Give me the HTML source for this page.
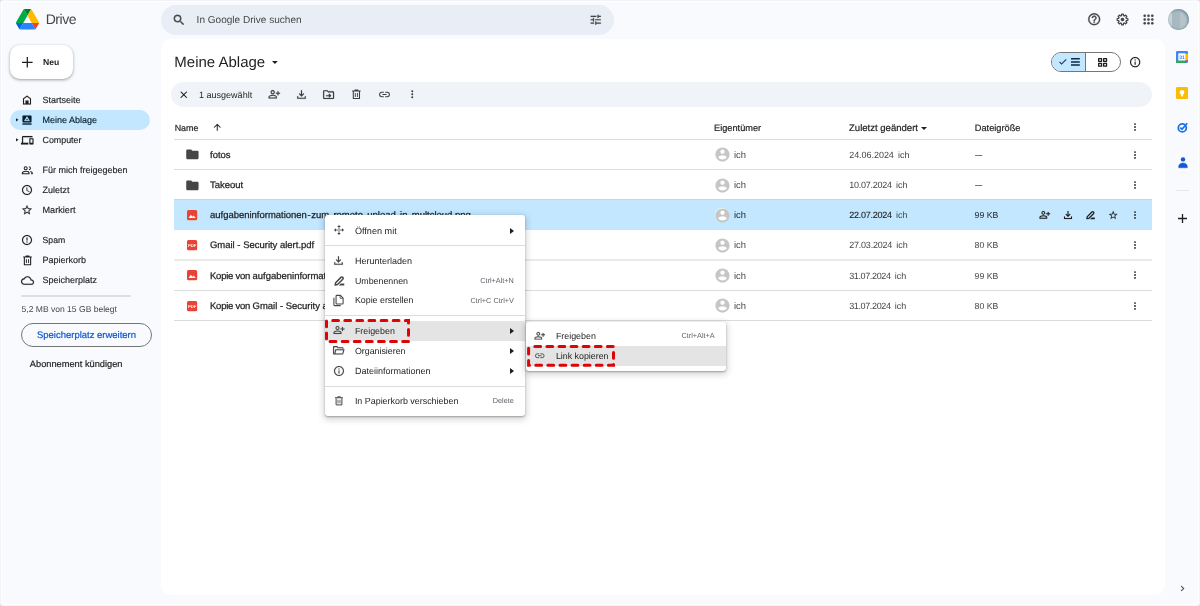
<!DOCTYPE html>
<html lang="de">
<head>
<meta charset="utf-8">
<title>Meine Ablage – Google Drive</title>
<style>
*{box-sizing:border-box;margin:0;padding:0}
html,body{width:1200px;height:606px;overflow:hidden;background:#d9d9db}
body{text-rendering:geometricPrecision;font-family:"Liberation Sans",sans-serif;font-size:9px;color:#1f1f1f;position:relative}
#outer{position:absolute;left:0;top:0;width:1200px;height:606px;background:#f2f3f7;border-radius:3px}
#frame{position:absolute;left:1px;top:1px;width:1198px;height:604px;background:#fff;border-radius:3px}
#app{position:absolute;left:2px;top:2px;width:1195.600px;height:601.600px;background:#f8fafd;border-radius:2px;overflow:hidden}
#root{position:absolute;left:-2px;top:-2px;width:1200px;height:606px;will-change:transform}
.t{position:absolute;white-space:nowrap;line-height:12px;height:12px;font-size:9px}
.abs{position:absolute}
svg{position:absolute;overflow:visible}
.nav{color:#1f1f1f;-webkit-text-stroke:0.15px #1f1f1f}
.g{color:#444746}
.hd{color:#1f1f1f;-webkit-text-stroke:0.2px #1f1f1f}
.fn{color:#1f1f1f;-webkit-text-stroke:0.25px #1f1f1f;font-size:9.480px}
.line{position:absolute;left:174px;width:978px;height:1px;background:#dcdcdc;transform:rotate(0.0001deg)}
.mi{color:#1f1f1f}
.sc{color:#5f6368;font-size:7.300px}
.menu{position:absolute;background:#fff;border-radius:3px;box-shadow:0 1px 2px rgba(0,0,0,.3),0 2px 6px 2px rgba(0,0,0,.15)}
.sep{position:absolute;height:1px;background:#dcdcdc}
.hl{position:absolute;background:#e4e4e4}
.dash{position:absolute;fill:none;stroke:#dc0505;stroke-width:3;stroke-linecap:round;stroke-dasharray:5.800 6.300;stroke-dashoffset:5.900}
</style>
</head>
<body>
<div id="outer"></div><div id="frame"></div>
<div id="app"><div id="root">

<div id="topbar">
<svg id="logo" style="left:16px;top:9px" width="23" height="20.500" viewBox="0 0 87.300 78">
<path d="m6.600 66.850 3.850 6.650c.8 1.400 1.950 2.500 3.300 3.300l13.750-23.800h-27.500c0 1.550.4 3.100 1.200 4.500z" fill="#0066da"/>
<path d="m43.650 25-13.750-23.800c-1.350.8-2.500 1.900-3.300 3.300l-25.400 44a9.060 9.060 0 0 0 -1.200 4.500h27.500z" fill="#00ac47"/>
<path d="m73.550 76.800c1.350-.8 2.500-1.900 3.300-3.300l1.600-2.750 7.650-13.250c.8-1.400 1.200-2.950 1.200-4.500h-27.502l5.852 11.500z" fill="#ea4335"/>
<path d="m43.650 25 13.750-23.800c-1.350-.8-2.900-1.200-4.500-1.200h-18.500c-1.600 0-3.150.45-4.500 1.200z" fill="#00832d"/>
<path d="m59.800 53h-32.300l-13.750 23.800c1.350.8 2.900 1.200 4.500 1.200h50.800c1.600 0 3.150-.45 4.500-1.200z" fill="#2684fc"/>
<path d="m73.400 26.500-12.700-22c-.8-1.400-1.950-2.500-3.300-3.300l-13.750 23.800 16.150 28h27.450c0-1.550-.4-3.100-1.200-4.500z" fill="#ffba00"/>
</svg>
<div class="t " style="left:45.7px;top:10px;line-height:18px;height:18px;color:#444746;letter-spacing:-0.450px;font-size:14px">Drive</div>
<div class="abs" id="search" style="left:161px;top:4.500px;width:453px;height:30px;border-radius:15px;background:#e9eef6"></div>
<svg style="left:172.30px;top:12.80px;color:#444746" width="14.00" height="14.00" viewBox="0 0 24 24" fill="#444746" stroke="#444746" stroke-width="0.600"><path d="M15.500 14h-.79l-.28-.27A6.470 6.470 0 0 0 16 9.500 6.500 6.500 0 1 0 9.500 16c1.610 0 3.090-.59 4.230-1.570l.27.280v.79l5 4.990L20.490 19l-4.990-5zm-6 0C7.010 14 5 11.990 5 9.500S7.010 5 9.500 5 14 7.010 14 9.500 11.990 14 9.500 14z"/></svg>
<div class="t g" style="left:196.6px;top:15px;font-size:10.05px">In Google Drive suchen</div>
<svg style="left:588.85px;top:12.75px;color:#444746" width="13.50" height="13.50" viewBox="0 0 24 24" fill="#444746" stroke="#444746" stroke-width="0.25" stroke-linejoin="round"><path d="M3 17v2h6v-2H3zM3 5v2h10V5H3zm10 16v-2h8v-2h-8v-2h-2v6h2zM7 9v2H3v2h4v2h2V9H7zm14 4v-2H11v2h10zm-6-4h2V7h4V5h-4V3h-2v6z"/></svg>
<svg style="left:1087.30px;top:12.30px;color:#444746" width="14.40" height="14.40" viewBox="0 0 24 24" fill="#444746" stroke="#444746" stroke-width="0.500"><path d="M11 18h2v-2h-2v2zm1-16C6.480 2 2 6.480 2 12s4.480 10 10 10 10-4.480 10-10S17.520 2 12 2zm0 18c-4.410 0-8-3.590-8-8s3.590-8 8-8 8 3.590 8 8-3.590 8-8 8zm0-14c-2.210 0-4 1.790-4 4h2c0-1.100.9-2 2-2s2 .9 2 2c0 2-3 1.750-3 5h2c0-2.250 3-2.500 3-5 0-2.210-1.790-4-4-4z"/></svg>
<svg style="left:1115.50px;top:13.00px;color:#444746" width="13.00" height="13.00" viewBox="0 0 24 24" fill="#444746" stroke="#444746" stroke-width="0.25" stroke-linejoin="round"><path d="M10.10 4.85 L10.41 2.13 L13.59 2.13 L13.90 4.85 L15.71 5.60 L17.85 3.89 L20.11 6.15 L18.40 8.29 L19.15 10.10 L21.87 10.41 L21.87 13.59 L19.15 13.90 L18.40 15.71 L20.11 17.85 L17.85 20.11 L15.71 18.40 L13.90 19.15 L13.59 21.87 L10.41 21.87 L10.10 19.15 L8.29 18.40 L6.15 20.11 L3.89 17.85 L5.60 15.71 L4.85 13.90 L2.13 13.59 L2.13 10.41 L4.85 10.10 L5.60 8.29 L3.89 6.15 L6.15 3.89 L8.29 5.60Z" fill="none" stroke="currentColor" stroke-width="2.300" stroke-linejoin="round"/><circle cx="12" cy="12" r="3.200"/></svg>
<svg style="left:1142.20px;top:12.90px;color:#444746" width="13.00" height="13.00" viewBox="0 0 24 24" fill="#444746" stroke="#444746" stroke-width="0.25" stroke-linejoin="round"><circle cx="5" cy="5" r="2.300"/><circle cx="5" cy="12" r="2.300"/><circle cx="5" cy="19" r="2.300"/><circle cx="12" cy="5" r="2.300"/><circle cx="12" cy="12" r="2.300"/><circle cx="12" cy="19" r="2.300"/><circle cx="19" cy="5" r="2.300"/><circle cx="19" cy="12" r="2.300"/><circle cx="19" cy="19" r="2.300"/></svg>
<div class="abs" id="avatar" style="left:1168.200px;top:9px;width:20.800px;height:20.800px;border-radius:50%;background:linear-gradient(90deg,#c6d3d8 0,#c6d3d8 17%,#a6b7bf 19%,#a9bac2 58%,#b7c5cb 60%,#b4c2c9 100%);box-shadow:inset -1.500px 1.500px 2px #7f98a4,inset 0 -1px 1.500px #8fa5af"></div>
</div>
<div id="sidebar">
<div class="abs" style="left:10px;top:45px;width:63px;height:34px;border-radius:10px;background:#fff;box-shadow:0 1px 2px rgba(60,64,67,.3),0 1px 3px 1px rgba(60,64,67,.15)"></div>
<svg style="left:22.200px;top:56.800px" width="10.600" height="10.600" viewBox="0 0 11 11"><path d="M5.500 0v11M0 5.500h11" stroke="#1f1f1f" stroke-width="1.300" fill="none"/></svg>
<div class="t " style="left:43px;top:56px;font-weight:bold;color:#1f1f1f;font-size:8.6px">Neu</div>
<div class="abs" style="left:10px;top:110px;width:140px;height:20px;border-radius:10px;background:#c2e7ff"></div>
<svg style="left:21.20px;top:94.00px;color:#1f1f1f" width="12.00" height="12.00" viewBox="0 0 24 24" fill="#1f1f1f" stroke="#1f1f1f" stroke-width="0.25" stroke-linejoin="round"><path d="M12 3L4 9v12h16V9l-8-6zm6 16H6v-9l6-4.500 6 4.500v9z"/><path d="M9 13h6v7H9z"/></svg>
<div class="t nav" style="left:42.5px;top:94px;color:#1f1f1f">Startseite</div>
<svg style="left:21.20px;top:114.00px;color:#001d35" width="12.00" height="12.00" viewBox="0 0 24 24" fill="#001d35" stroke="#001d35" stroke-width="0.25" stroke-linejoin="round"><path d="M5 3h14a2 2 0 0 1 2 2v10a2 2 0 0 1-2 2H5a2 2 0 0 1-2-2V5a2 2 0 0 1 2-2z"/><path d="M3 18.700h18v2.600H3z"/><path d="M12 5.200l5 8.300H7z" fill="#c2e7ff" stroke="#c2e7ff" stroke-width="1" stroke-linejoin="round"/><circle cx="12" cy="10.800" r="1.500" stroke="none"/></svg>
<div class="t nav" style="left:42.5px;top:114px;color:#001d35">Meine Ablage</div>
<svg style="left:20.95px;top:133.75px;color:#1f1f1f" width="12.50" height="12.50" viewBox="0 0 24 24" fill="#1f1f1f" stroke="#1f1f1f" stroke-width="0.25" stroke-linejoin="round"><path d="M4 6h18V4H4c-1.100 0-2 .9-2 2v11H0v3h14v-3H4V6zm19 2h-6c-.55 0-1 .45-1 1v10c0 .55.45 1 1 1h6c.55 0 1-.45 1-1V9c0-.55-.45-1-1-1zm-1 9h-4v-7h4v7z"/></svg>
<div class="t nav" style="left:42.5px;top:134px;color:#1f1f1f;font-size:8.9px">Computer</div>
<svg style="left:20.95px;top:163.75px;color:#1f1f1f" width="12.50" height="12.50" viewBox="0 0 24 24" fill="#1f1f1f" stroke="#1f1f1f" stroke-width="0.25" stroke-linejoin="round"><circle cx="9" cy="8.300" r="2.900" fill="none" stroke="currentColor" stroke-width="2"/><path d="M2.500 18.600v-1.200c0-2.300 4.200-3.500 6.500-3.500s6.500 1.200 6.500 3.500v1.200z" fill="none" stroke="currentColor" stroke-width="2" stroke-linejoin="round"/><path d="M15.200 5.400a2.900 2.900 0 0 1 0 5.800M17.800 14.300c2 .5 3.900 1.500 3.900 3.100v1.200h-2.500" fill="none" stroke="currentColor" stroke-width="2"/></svg>
<div class="t nav" style="left:42.5px;top:164px;color:#1f1f1f">Für mich freigegeben</div>
<svg style="left:21.20px;top:184.00px;color:#1f1f1f" width="12.00" height="12.00" viewBox="0 0 24 24" fill="#1f1f1f" stroke="#1f1f1f" stroke-width="0.25" stroke-linejoin="round"><path d="M11.990 2C6.470 2 2 6.480 2 12s4.470 10 9.990 10C17.520 22 22 17.520 22 12S17.520 2 11.990 2zM12 20c-4.420 0-8-3.580-8-8s3.580-8 8-8 8 3.580 8 8-3.580 8-8 8zm.5-13H11v6l5.250 3.150.75-1.230-4.500-2.670z"/></svg>
<div class="t nav" style="left:42.5px;top:184px;color:#1f1f1f">Zuletzt</div>
<svg style="left:21.20px;top:204.00px;color:#1f1f1f" width="12.00" height="12.00" viewBox="0 0 24 24" fill="#1f1f1f" stroke="#1f1f1f" stroke-width="0.25" stroke-linejoin="round"><path d="M22 9.240l-7.190-.62L12 2 9.190 8.630 2 9.240l5.460 4.730L5.820 21 12 17.270 18.180 21l-1.630-7.030L22 9.240zM12 15.400l-3.760 2.270 1-4.280-3.320-2.880 4.380-.38L12 6.100l1.710 4.040 4.380.38-3.320 2.880 1 4.280L12 15.400z"/></svg>
<div class="t nav" style="left:42.5px;top:204px;color:#1f1f1f;font-size:9.15px">Markiert</div>
<svg style="left:21.20px;top:234.00px;color:#1f1f1f" width="12.00" height="12.00" viewBox="0 0 24 24" fill="#1f1f1f" stroke="#1f1f1f" stroke-width="0.25" stroke-linejoin="round"><path d="M11 15h2v2h-2zm0-8h2v6h-2zm.99-5C6.470 2 2 6.480 2 12s4.470 10 9.990 10C17.520 22 22 17.520 22 12S17.520 2 11.990 2zM12 20c-4.420 0-8-3.580-8-8s3.580-8 8-8 8 3.580 8 8-3.580 8-8 8z"/></svg>
<div class="t nav" style="left:42.5px;top:234px;color:#1f1f1f;font-size:8.7px">Spam</div>
<svg style="left:20.70px;top:253.50px;color:#1f1f1f" width="13.00" height="13.00" viewBox="0 0 24 24" fill="#1f1f1f" stroke="#1f1f1f" stroke-width="0.25" stroke-linejoin="round"><path d="M4 5.500h16M9.200 5V3.600h5.600V5M6.200 6.500v13.300h11.600V6.500" fill="none" stroke="currentColor" stroke-width="2" stroke-linejoin="round"/><path d="M10 9.500v7.300M14 9.500v7.300" fill="none" stroke="currentColor" stroke-width="1.700"/></svg>
<div class="t nav" style="left:42.5px;top:254px;color:#1f1f1f">Papierkorb</div>
<svg style="left:20.70px;top:273.50px;color:#1f1f1f" width="13.00" height="13.00" viewBox="0 0 24 24" fill="#1f1f1f" stroke="#1f1f1f" stroke-width="0.25" stroke-linejoin="round"><path d="M12 6c2.620 0 4.880 1.860 5.390 4.430l.3 1.500 1.530.11c1.560.1 2.780 1.410 2.780 2.960 0 1.650-1.350 3-3 3H6c-2.210 0-4-1.790-4-4 0-2.050 1.530-3.760 3.560-3.970l1.070-.11.5-.95C8.080 7.140 9.940 6 12 6m0-2C9.110 4 6.600 5.640 5.350 8.040 2.340 8.360 0 10.910 0 14c0 3.310 2.690 6 6 6h13c2.760 0 5-2.240 5-5 0-2.640-2.050-4.780-4.650-4.960C18.670 6.590 15.640 4 12 4z"/></svg>
<div class="t nav" style="left:42.5px;top:274px;color:#1f1f1f">Speicherplatz</div>
<svg style="left:16.300px;top:118.2px" width="2.500" height="3.600" viewBox="0 0 3 4"><path d="M0 0l3 2-3 2z" fill="#1f1f1f"/></svg>
<svg style="left:16.300px;top:138.2px" width="2.500" height="3.600" viewBox="0 0 3 4"><path d="M0 0l3 2-3 2z" fill="#1f1f1f"/></svg>
<div class="abs" style="left:21px;top:295.400px;width:110px;height:2px;border-radius:1px;background:#dcdfe0"></div>
<div class="t g" style="left:21.5px;top:303px;font-size:8.55px">5,2 MB von 15 GB belegt</div>
<div class="abs" style="left:21px;top:323px;width:131px;height:24px;border-radius:12px;border:1px solid #747775"></div>
<div class="t " style="left:21px;top:330px;width:131px;text-align:center;color:#0b57d0;-webkit-text-stroke:0.2px #0b57d0;font-size:9.48px">Speicherplatz erweitern</div>
<div class="t " style="left:29.8px;top:358px;color:#1f1f1f;-webkit-text-stroke:0.2px #1f1f1f;font-size:9.28px">Abonnement kündigen</div>
</div>
<div id="main">
<div class="abs" style="left:161px;top:39.400px;width:1004px;height:556px;border-radius:10px;background:#fff"></div>
<div class="t " style="left:174.3px;top:53px;font-size:15px;line-height:20px;height:20px;color:#1f1f1f">Meine Ablage</div>
<svg style="left:272px;top:60.800px" width="5.800" height="3" viewBox="0 0 7 3.500"><path d="M0 0h7L3.500 3.500z" fill="#1f1f1f"/></svg>
<div class="abs" style="left:1051px;top:52px;width:70px;height:20px;border-radius:10px;border:1px solid #747775;background:#fff;overflow:hidden"><div class="abs" style="left:0;top:0;width:34px;height:18px;background:#c2e7ff;border-right:1px solid #747775"></div></div>
<svg style="left:1057.60px;top:57.20px;color:#0c2a45" width="9.60" height="9.60" viewBox="0 0 24 24" fill="#0c2a45" stroke="#0c2a45" stroke-width="0.9" stroke-linejoin="round"><path d="M9 16.170L4.830 12l-1.420 1.410L9 19 21 7l-1.410-1.410z"/></svg>
<svg style="left:1070.600px;top:58.100px" width="8.800" height="8" viewBox="0 0 8.800 8"><path d="M0 0.100h8.800v1.500H0zM0 3.200h8.800v1.500H0zM0 6.300h8.800v1.500H0z" fill="#0c2a45"/></svg>
<svg style="left:1098px;top:57.700px" width="9.200" height="8.800" viewBox="0 0 9.200 8.800"><path d="M0.650 0.650h2.900v2.700h-2.900zM5.650 0.650h2.900v2.700h-2.900zM0.650 5.450h2.900v2.700h-2.900zM5.650 5.450h2.900v2.700h-2.900z" fill="none" stroke="#1f1f1f" stroke-width="1.300" stroke-linejoin="round"/></svg>
<svg style="left:1129.15px;top:55.75px;color:#1f1f1f" width="12.30" height="12.30" viewBox="0 0 24 24" fill="#1f1f1f" stroke="#1f1f1f" stroke-width="0.25" stroke-linejoin="round"><path d="M11 7h2v2h-2zm0 4h2v6h-2zm1-9C6.480 2 2 6.480 2 12s4.480 10 10 10 10-4.480 10-10S17.520 2 12 2zm0 18c-4.410 0-8-3.590-8-8s3.590-8 8-8 8 3.590 8 8-3.590 8-8 8z"/></svg>
<div class="abs" style="left:171px;top:82px;width:981px;height:25px;border-radius:12.500px;background:#f0f4f9"></div>
<svg style="left:177.95px;top:89.05px;color:#1f1f1f" width="11.50" height="11.50" viewBox="0 0 24 24" fill="#1f1f1f" stroke="#1f1f1f" stroke-width="0.25" stroke-linejoin="round"><path d="M19 6.410L17.590 5 12 10.590 6.410 5 5 6.410 10.590 12 5 17.590 6.410 19 12 13.410 17.590 19 19 17.590 13.410 12z"/></svg>
<div class="t " style="left:199.1px;top:89px;color:#1f1f1f">1 ausgewählt</div>
<svg style="left:267.50px;top:88.30px;color:#3c3f40" width="12.60" height="12.60" viewBox="0 0 24 24" fill="#3c3f40" stroke="#3c3f40" stroke-width="0.25" stroke-linejoin="round"><path d="M20 9V6h-2v3h-3v2h3v3h2v-3h3V9h-3zM9 12c2.210 0 4-1.790 4-4s-1.790-4-4-4-4 1.790-4 4 1.790 4 4 4zm0-6c1.100 0 2 .9 2 2s-.9 2-2 2-2-.9-2-2 .9-2 2-2zm6.390 8.560C13.710 13.700 11.530 13 9 13s-4.710.7-6.390 1.560C1.610 15.070 1 16.100 1 17.220V20h16v-2.780c0-1.120-.61-2.150-1.610-2.660zM15 18H3v-.78c0-.38.2-.72.520-.88C4.710 15.730 6.630 15 9 15c2.370 0 4.290.73 5.480 1.340.32.160.52.500.52.880V18z"/></svg>
<svg style="left:294.90px;top:88.10px;color:#3c3f40" width="13.00" height="13.00" viewBox="0 0 24 24" fill="#3c3f40" stroke="#3c3f40" stroke-width="0.25" stroke-linejoin="round"><path d="M12 16l-5-5 1.400-1.450 2.600 2.600V4h2v8.150l2.600-2.600L17 11zM4 20v-5h2v3h12v-3h2v5z"/></svg>
<svg style="left:321.90px;top:88.00px;color:#3c3f40" width="13.20" height="13.20" viewBox="0 0 24 24" fill="#3c3f40" stroke="#3c3f40" stroke-width="0.25" stroke-linejoin="round"><path d="M20 6h-8l-2-2H4c-1.100 0-2 .9-2 2v12c0 1.100.9 2 2 2h16c1.100 0 2-.9 2-2V8c0-1.100-.9-2-2-2zm0 12H4V6h5.170l2 2H20v10zm-8.160-1.590L13.250 17.800 17 14l-3.750-3.800-1.410 1.410L13.170 13H7.500v2h5.670l-1.330 1.410z"/></svg>
<svg style="left:350.20px;top:88.20px;color:#3c3f40" width="12.80" height="12.80" viewBox="0 0 24 24" fill="#3c3f40" stroke="#3c3f40" stroke-width="0.25" stroke-linejoin="round"><path d="M4 5.500h16M9.200 5V3.600h5.600V5M6.200 6.500v13.300h11.600V6.500" fill="none" stroke="currentColor" stroke-width="2" stroke-linejoin="round"/><path d="M10 9.500v7.300M14 9.500v7.300" fill="none" stroke="currentColor" stroke-width="1.700"/></svg>
<svg style="left:377.50px;top:88.10px;color:#3c3f40" width="13.00" height="13.00" viewBox="0 0 24 24" fill="#3c3f40" stroke="#3c3f40" stroke-width="0.25" stroke-linejoin="round"><path d="M10.700 8H7a4 4 0 0 0 0 8h3.700M13.300 8H17a4 4 0 0 1 0 8h-3.700M8.200 12h7.600" fill="none" stroke="currentColor" stroke-width="1.900"/></svg>
<svg style="left:406.65px;top:89.35px;color:#3c3f40" width="10.50" height="10.50" viewBox="0 0 24 24" fill="#3c3f40" stroke="#3c3f40" stroke-width="0.25" stroke-linejoin="round"><circle cx="12" cy="5" r="2.150"/><circle cx="12" cy="12" r="2.150"/><circle cx="12" cy="19" r="2.150"/></svg>
<div class="t hd" style="left:174.7px;top:122px;font-size:8.9px">Name</div>
<svg style="left:211.75px;top:122.05px;color:#1f1f1f" width="10.50" height="10.50" viewBox="0 0 24 24" fill="#1f1f1f" stroke="#1f1f1f" stroke-width="0.25" stroke-linejoin="round"><path d="M4 12l1.410 1.410L11 7.830V20h2V7.830l5.580 5.590L20 12l-8-8-8 8z"/></svg>
<div class="t hd" style="left:714px;top:122px;font-size:9.23px">Eigentümer</div>
<div class="t hd" style="left:849px;top:123px;font-size:9.56px">Zuletzt geändert</div>
<svg style="left:921px;top:126.500px" width="6" height="3" viewBox="0 0 6 3"><path d="M0 0h6L3 3z" fill="#1f1f1f"/></svg>
<div class="t hd" style="left:974.8px;top:122px;font-size:9.22px">Dateigröße</div>
<svg style="left:1130.30px;top:122.00px;color:#1f1f1f" width="10.00" height="10.00" viewBox="0 0 24 24" fill="#1f1f1f"><circle cx="12" cy="5" r="2.150"/><circle cx="12" cy="12" r="2.150"/><circle cx="12" cy="19" r="2.150"/></svg>
<div class="line" style="top:139px"></div>
<div class="line" style="top:169.100px"></div>
<div class="line" style="top:199.100px;background:#d0d4d8"></div>
<div class="abs" style="left:174px;top:199.900px;width:978px;height:30.100px;background:#c2e7ff"></div>
<div class="line" style="top:259px;height:2px;background:#ebebeb"></div>
<div class="line" style="top:289.550px"></div>
<div class="line" style="top:319.650px"></div>
<svg style="left:184.60px;top:147.40px;color:#444746" width="14.80" height="14.80" viewBox="0 0 24 24" fill="#444746"><path d="M10 4H4c-1.100 0-1.990.9-1.990 2L2 18c0 1.100.9 2 2 2h16c1.100 0 2-.9 2-2V8c0-1.100-.9-2-2-2h-8l-2-2z"/></svg>
<div class="t fn" style="left:210px;top:150px;">fotos</div>
<div class="abs" style="left:715px;top:147.90px;width:14px;height:14px;border-radius:50%;background:#fff"></div>
<svg style="left:713.50px;top:146.40px;color:#c4c7c5" width="17.00" height="17.00" viewBox="0 0 24 24" fill="#c4c7c5"><path d="M12 2C6.480 2 2 6.480 2 12s4.480 10 10 10 10-4.480 10-10S17.520 2 12 2zm0 3c1.660 0 3 1.340 3 3s-1.340 3-3 3-3-1.340-3-3 1.340-3 3-3zm0 14.200c-2.500 0-4.710-1.280-6-3.220.03-1.990 4-3.080 6-3.080 1.990 0 5.970 1.090 6 3.080-1.290 1.940-3.500 3.220-6 3.220z"/></svg>
<div class="t g" style="left:734px;top:149px;font-size:9.4px">ich</div>
<div class="t g" style="left:849.2px;top:149px;word-spacing:1.700px"><span style="letter-spacing:-0.04px">24.06.2024</span> ich</div>
<div class="t g" style="left:975.3px;top:150px;font-size:6.800px;-webkit-text-stroke:0.250px #444746">—</div>
<svg style="left:1130.30px;top:150.00px;color:#1f1f1f" width="10.00" height="10.00" viewBox="0 0 24 24" fill="#1f1f1f"><circle cx="12" cy="5" r="2.150"/><circle cx="12" cy="12" r="2.150"/><circle cx="12" cy="19" r="2.150"/></svg>
<svg style="left:184.60px;top:177.52px;color:#444746" width="14.80" height="14.80" viewBox="0 0 24 24" fill="#444746"><path d="M10 4H4c-1.100 0-1.990.9-1.990 2L2 18c0 1.100.9 2 2 2h16c1.100 0 2-.9 2-2V8c0-1.100-.9-2-2-2h-8l-2-2z"/></svg>
<div class="t fn" style="left:210px;top:180px;">Takeout</div>
<div class="abs" style="left:715px;top:178.02px;width:14px;height:14px;border-radius:50%;background:#fff"></div>
<svg style="left:713.50px;top:176.52px;color:#c4c7c5" width="17.00" height="17.00" viewBox="0 0 24 24" fill="#c4c7c5"><path d="M12 2C6.480 2 2 6.480 2 12s4.480 10 10 10 10-4.480 10-10S17.520 2 12 2zm0 3c1.660 0 3 1.340 3 3s-1.340 3-3 3-3-1.340-3-3 1.340-3 3-3zm0 14.200c-2.500 0-4.710-1.280-6-3.220.03-1.990 4-3.080 6-3.080 1.990 0 5.970 1.090 6 3.080-1.290 1.940-3.500 3.220-6 3.220z"/></svg>
<div class="t g" style="left:734px;top:179px;font-size:9.4px">ich</div>
<div class="t g" style="left:849.2px;top:179px;word-spacing:1.700px"><span style="letter-spacing:-0.25px">10.07.2024</span> ich</div>
<div class="t g" style="left:975.3px;top:180px;font-size:6.800px;-webkit-text-stroke:0.250px #444746">—</div>
<svg style="left:1130.30px;top:180.12px;color:#1f1f1f" width="10.00" height="10.00" viewBox="0 0 24 24" fill="#1f1f1f"><circle cx="12" cy="5" r="2.150"/><circle cx="12" cy="12" r="2.150"/><circle cx="12" cy="19" r="2.150"/></svg>
<svg style="left:187px;top:210.14px" width="10.200" height="10.200" viewBox="0 0 10 10"><rect width="10" height="10" rx="1.500" fill="#ea4335"/><path d="M1.500 7.800l2.300-3.200 1.600 2.100 1.100-1.400 2 2.500z" fill="#fff"/></svg>
<div class="t fn" style="left:210px;top:210px;">aufgabeninformationen<span style="margin:0 0.600px">-</span>zum<span style="margin:0 0.600px">-</span>remote<span style="margin:0 0.600px">-</span>upload<span style="margin:0 0.600px">-</span>in<span style="margin:0 0.600px">-</span>multcloud.png</div>
<div class="abs" style="left:715px;top:208.14px;width:14px;height:14px;border-radius:50%;background:#fff"></div>
<svg style="left:713.50px;top:206.64px;color:#c4c7c5" width="17.00" height="17.00" viewBox="0 0 24 24" fill="#c4c7c5"><path d="M12 2C6.480 2 2 6.480 2 12s4.480 10 10 10 10-4.480 10-10S17.520 2 12 2zm0 3c1.660 0 3 1.340 3 3s-1.340 3-3 3-3-1.340-3-3 1.340-3 3-3zm0 14.200c-2.500 0-4.710-1.280-6-3.220.03-1.990 4-3.080 6-3.080 1.990 0 5.970 1.090 6 3.080-1.290 1.940-3.500 3.220-6 3.220z"/></svg>
<div class="t " style="left:734px;top:209px;color:#1f1f1f;font-size:9.4px">ich</div>
<div class="t " style="left:849.2px;top:209px;color:#1f1f1f;-webkit-text-stroke:0.100px #1f1f1f;word-spacing:1.700px"><span style="letter-spacing:-0.25px">22.07.2024</span> <span style="-webkit-text-stroke:0;color:#444746">ich</span></div>
<div class="t " style="left:974.6px;top:209px;color:#1f1f1f;font-size:8.7px">99 KB</div>
<svg style="left:1130.30px;top:210.24px;color:#1f1f1f" width="10.00" height="10.00" viewBox="0 0 24 24" fill="#1f1f1f"><circle cx="12" cy="5" r="2.150"/><circle cx="12" cy="12" r="2.150"/><circle cx="12" cy="19" r="2.150"/></svg>
<svg style="left:187px;top:240.26px" width="10.200" height="10.200" viewBox="0 0 10 10"><rect width="10" height="10" rx="1.500" fill="#ea4335"/><text x="5" y="6.500" font-size="4.100" font-weight="bold" fill="#fff" text-anchor="middle" font-family="&quot;Liberation Sans&quot;,sans-serif">PDF</text></svg>
<div class="t fn" style="left:210px;top:240px;">Gmail - Security alert.pdf</div>
<div class="abs" style="left:715px;top:238.26px;width:14px;height:14px;border-radius:50%;background:#fff"></div>
<svg style="left:713.50px;top:236.76px;color:#c4c7c5" width="17.00" height="17.00" viewBox="0 0 24 24" fill="#c4c7c5"><path d="M12 2C6.480 2 2 6.480 2 12s4.480 10 10 10 10-4.480 10-10S17.520 2 12 2zm0 3c1.660 0 3 1.340 3 3s-1.340 3-3 3-3-1.340-3-3 1.340-3 3-3zm0 14.200c-2.500 0-4.710-1.280-6-3.220.03-1.990 4-3.080 6-3.080 1.990 0 5.970 1.090 6 3.080-1.290 1.940-3.500 3.220-6 3.220z"/></svg>
<div class="t g" style="left:734px;top:239px;font-size:9.4px">ich</div>
<div class="t g" style="left:849.2px;top:239px;word-spacing:1.700px"><span style="letter-spacing:-0.21px">27.03.2024</span> ich</div>
<div class="t g" style="left:974.6px;top:239px;font-size:8.7px">80 KB</div>
<svg style="left:1130.30px;top:240.36px;color:#1f1f1f" width="10.00" height="10.00" viewBox="0 0 24 24" fill="#1f1f1f"><circle cx="12" cy="5" r="2.150"/><circle cx="12" cy="12" r="2.150"/><circle cx="12" cy="19" r="2.150"/></svg>
<svg style="left:187px;top:270.38px" width="10.200" height="10.200" viewBox="0 0 10 10"><rect width="10" height="10" rx="1.500" fill="#ea4335"/><path d="M1.500 7.800l2.300-3.200 1.600 2.100 1.100-1.400 2 2.500z" fill="#fff"/></svg>
<div class="t fn" style="left:210px;top:271px;"><span style="letter-spacing:-0.220px">Kopie von </span>aufgabeninformationen<span style="margin:0 0.600px">-</span>zum<span style="margin:0 0.600px">-</span>remote<span style="margin:0 0.600px">-</span>upload<span style="margin:0 0.600px">-</span>in<span style="margin:0 0.600px">-</span>multcloud.png</div>
<div class="abs" style="left:715px;top:268.38px;width:14px;height:14px;border-radius:50%;background:#fff"></div>
<svg style="left:713.50px;top:266.88px;color:#c4c7c5" width="17.00" height="17.00" viewBox="0 0 24 24" fill="#c4c7c5"><path d="M12 2C6.480 2 2 6.480 2 12s4.480 10 10 10 10-4.480 10-10S17.520 2 12 2zm0 3c1.660 0 3 1.340 3 3s-1.340 3-3 3-3-1.340-3-3 1.340-3 3-3zm0 14.200c-2.500 0-4.710-1.280-6-3.220.03-1.990 4-3.080 6-3.080 1.990 0 5.970 1.090 6 3.080-1.290 1.940-3.500 3.220-6 3.220z"/></svg>
<div class="t g" style="left:734px;top:270px;font-size:9.4px">ich</div>
<div class="t g" style="left:849.2px;top:270px;word-spacing:1.700px"><span style="letter-spacing:-0.37px">31.07.2024</span> ich</div>
<div class="t g" style="left:974.6px;top:270px;font-size:8.7px">99 KB</div>
<svg style="left:1130.30px;top:270.48px;color:#1f1f1f" width="10.00" height="10.00" viewBox="0 0 24 24" fill="#1f1f1f"><circle cx="12" cy="5" r="2.150"/><circle cx="12" cy="12" r="2.150"/><circle cx="12" cy="19" r="2.150"/></svg>
<svg style="left:187px;top:300.50px" width="10.200" height="10.200" viewBox="0 0 10 10"><rect width="10" height="10" rx="1.500" fill="#ea4335"/><text x="5" y="6.500" font-size="4.100" font-weight="bold" fill="#fff" text-anchor="middle" font-family="&quot;Liberation Sans&quot;,sans-serif">PDF</text></svg>
<div class="t fn" style="left:210px;top:301px;"><span style="letter-spacing:-0.220px">Kopie von </span>Gmail - Security alert.pdf</div>
<div class="abs" style="left:715px;top:298.50px;width:14px;height:14px;border-radius:50%;background:#fff"></div>
<svg style="left:713.50px;top:297.00px;color:#c4c7c5" width="17.00" height="17.00" viewBox="0 0 24 24" fill="#c4c7c5"><path d="M12 2C6.480 2 2 6.480 2 12s4.480 10 10 10 10-4.480 10-10S17.520 2 12 2zm0 3c1.660 0 3 1.340 3 3s-1.340 3-3 3-3-1.340-3-3 1.340-3 3-3zm0 14.200c-2.500 0-4.710-1.280-6-3.220.03-1.990 4-3.080 6-3.080 1.990 0 5.970 1.090 6 3.080-1.290 1.940-3.500 3.220-6 3.220z"/></svg>
<div class="t g" style="left:734px;top:300px;font-size:9.4px">ich</div>
<div class="t g" style="left:849.2px;top:300px;word-spacing:1.700px"><span style="letter-spacing:-0.37px">31.07.2024</span> ich</div>
<div class="t g" style="left:974.6px;top:300px;font-size:8.7px">80 KB</div>
<svg style="left:1130.30px;top:300.60px;color:#1f1f1f" width="10.00" height="10.00" viewBox="0 0 24 24" fill="#1f1f1f"><circle cx="12" cy="5" r="2.150"/><circle cx="12" cy="12" r="2.150"/><circle cx="12" cy="19" r="2.150"/></svg>
<svg style="left:1039.20px;top:209.30px;color:#1f1f1f" width="11.60" height="11.60" viewBox="0 0 24 24" fill="#1f1f1f" stroke="#1f1f1f" stroke-width="0.25" stroke-linejoin="round"><path d="M20 9V6h-2v3h-3v2h3v3h2v-3h3V9h-3zM9 12c2.210 0 4-1.790 4-4s-1.790-4-4-4-4 1.790-4 4 1.790 4 4 4zm0-6c1.100 0 2 .9 2 2s-.9 2-2 2-2-.9-2-2 .9-2 2-2zm6.390 8.560C13.710 13.700 11.530 13 9 13s-4.710.7-6.390 1.560C1.610 15.070 1 16.100 1 17.220V20h16v-2.780c0-1.120-.61-2.150-1.610-2.660zM15 18H3v-.78c0-.38.2-.72.520-.88C4.710 15.730 6.630 15 9 15c2.370 0 4.290.73 5.480 1.340.32.160.52.500.52.880V18z"/></svg>
<svg style="left:1061.60px;top:209.10px;color:#1f1f1f" width="12.00" height="12.00" viewBox="0 0 24 24" fill="#1f1f1f" stroke="#1f1f1f" stroke-width="0.25" stroke-linejoin="round"><path d="M12 16l-5-5 1.400-1.450 2.600 2.600V4h2v8.150l2.600-2.600L17 11zM4 20v-5h2v3h12v-3h2v5z"/></svg>
<svg style="left:1085.00px;top:209.80px;color:#1f1f1f" width="10.60" height="10.60" viewBox="0 0 24 24" fill="#1f1f1f" stroke="#1f1f1f" stroke-width="0.25" stroke-linejoin="round"><path d="M4.300 19.700l.9-4.600L15.600 4.700a2.600 2.600 0 0 1 3.700 3.700L8.900 18.800z" fill="none" stroke="currentColor" stroke-width="2.900" stroke-linejoin="round"/><path d="M15.200 16.800h7v3.900h-10.900z" stroke="none"/></svg>
<svg style="left:1107.60px;top:209.90px;color:#1f1f1f" width="10.40" height="10.40" viewBox="0 0 24 24" fill="#1f1f1f" stroke="#1f1f1f" stroke-width="0.25" stroke-linejoin="round"><path d="M22 9.240l-7.190-.62L12 2 9.190 8.630 2 9.240l5.460 4.730L5.820 21 12 17.270 18.180 21l-1.630-7.030L22 9.240zM12 15.400l-3.760 2.270 1-4.280-3.320-2.880 4.380-.38L12 6.100l1.710 4.040 4.380.38-3.320 2.880 1 4.280L12 15.400z"/></svg>
</div>
<div id="rail">
<svg style="left:1176px;top:51px" width="12" height="12" viewBox="0 0 12 12">
<rect x="0" y="0" width="12" height="12" rx="1.200" fill="#4285f4"/>
<rect x="9.200" y="2.800" width="2.800" height="6.400" fill="#fbbc04"/>
<rect x="0" y="9.200" width="9.200" height="2.800" fill="#34a853"/>
<rect x="0" y="2.800" width="2.800" height="6.400" fill="#4285f4"/>
<path d="M9.200 9.200H12L9.200 12z" fill="#ea4335"/>
<rect x="2.300" y="2.300" width="7.200" height="7.200" fill="#fff"/>
<text x="6" y="7.900" font-size="5" font-weight="bold" fill="#4285f4" text-anchor="middle" font-family="&quot;Liberation Sans&quot;,sans-serif">31</text>
</svg>
<svg style="left:1176.200px;top:86.500px" width="12" height="12" viewBox="0 0 12 12">
<rect width="12" height="12" rx="1.200" fill="#fbbc04"/>
<circle cx="6" cy="5.200" r="2.300" fill="#fff"/><rect x="4.900" y="7" width="2.200" height="2.400" fill="#fff"/>
</svg>
<svg style="left:1177px;top:122px" width="11" height="11" viewBox="0 0 11 11">
<circle cx="5.300" cy="5.900" r="4" fill="none" stroke="#1a73e8" stroke-width="1.800"/>
<path d="M3.300 5.600l1.700 1.700L10.200 1.200" fill="none" stroke="#1a73e8" stroke-width="1.700"/>
</svg>
<svg style="left:1177.500px;top:156.500px" width="10" height="11" viewBox="0 0 10 11">
<circle cx="5" cy="2.400" r="2.200" fill="#1557d6"/>
<path d="M0.700 10.800V9.300C0.700 7 3 5.900 5 5.900S9.300 7 9.300 9.300V10.800z" fill="#1557d6" stroke="#1557d6" stroke-width="0.400" stroke-linejoin="round"/>
</svg>
<div class="abs" style="left:1176px;top:190px;width:13px;height:1px;background:#e6e8ec"></div>
<svg style="left:1178px;top:214px" width="9" height="9" viewBox="0 0 9 9"><path d="M4.500 0v9M0 4.500h9" stroke="#1f1f1f" stroke-width="1.300" fill="none"/></svg>
<svg style="left:1177.00px;top:583.00px;color:#444746" width="11.00" height="11.00" viewBox="0 0 24 24" fill="#444746" stroke="#444746" stroke-width="0.25" stroke-linejoin="round"><path d="M10 6L8.590 7.410 13.170 12l-4.580 4.590L10 18l6-6z"/></svg>
</div>
<div id="ctx">
<div class="menu" style="left:325px;top:215px;width:200px;height:201px"></div>
<div class="sep" style="left:325px;width:200px;top:245px"></div>
<div class="sep" style="left:325px;width:200px;top:315px"></div>
<div class="sep" style="left:325px;width:200px;top:386px"></div>
<div class="hl" style="left:325px;width:200px;top:321px;height:19.500px"></div>
<svg style="left:332.70px;top:224.40px;color:#444746" width="12.00" height="12.00" viewBox="0 0 24 24" fill="#444746" stroke="#444746" stroke-width="0.25" stroke-linejoin="round"><path d="M12 5v14M5 12h14" fill="none" stroke="currentColor" stroke-width="1.700"/><path d="M12 1.800l3.600 4.200H8.400zM12 22.200l3.600-4.200H8.400zM1.800 12l4.200-3.600v7.200zM22.200 12l-4.200-3.600v7.200z" stroke="none"/><circle cx="12" cy="12" r="1.600" fill="#fff" stroke="none"/></svg>
<div class="t mi" style="left:354.9px;top:225px;font-size:9.1px">Öffnen mit</div>
<svg style="left:509.500px;top:228.1px" width="4" height="6" viewBox="0 0 4 6"><path d="M0 0l4 3-4 3z" fill="#1f1f1f"/></svg>
<svg style="left:332.20px;top:253.80px;color:#444746" width="13.00" height="13.00" viewBox="0 0 24 24" fill="#444746" stroke="#444746" stroke-width="0.25" stroke-linejoin="round"><path d="M12 16l-5-5 1.400-1.450 2.600 2.600V4h2v8.150l2.600-2.600L17 11zM4 20v-5h2v3h12v-3h2v5z"/></svg>
<div class="t mi" style="left:354.9px;top:255px;">Herunterladen</div>
<svg style="left:332.60px;top:274.50px;color:#444746" width="12.20" height="12.20" viewBox="0 0 24 24" fill="#444746" stroke="#444746" stroke-width="0.25" stroke-linejoin="round"><path d="M4.300 19.700l.9-4.600L15.600 4.700a2.600 2.600 0 0 1 3.700 3.700L8.900 18.800z" fill="none" stroke="currentColor" stroke-width="2.900" stroke-linejoin="round"/><path d="M15.200 16.800h7v3.900h-10.900z" stroke="none"/></svg>
<div class="t mi" style="left:354.9px;top:275px;font-size:8.85px">Umbenennen</div>
<div class="t sc" style="left:413.9px;top:275px;width:100px;text-align:right">Ctrl+Alt+N</div>
<svg style="left:332.20px;top:294.10px;color:#444746" width="13.00" height="13.00" viewBox="0 0 24 24" fill="#444746" stroke="#444746" stroke-width="0.25" stroke-linejoin="round"><path d="M9 2.500h6.500l5 5V17a1.500 1.500 0 0 1-1.500 1.500H9A1.500 1.500 0 0 1 7.500 17V4A1.500 1.500 0 0 1 9 2.500z" fill="none" stroke="currentColor" stroke-width="2" stroke-linejoin="round"/><path d="M15 3v5h5" fill="none" stroke="currentColor" stroke-width="1.500"/><path d="M3.500 7v13A1.500 1.500 0 0 0 5 21.500h11" fill="none" stroke="currentColor" stroke-width="2"/></svg>
<div class="t mi" style="left:354.9px;top:294px;font-size:8.85px">Kopie erstellen</div>
<div class="t sc" style="left:413.9px;top:295px;width:100px;text-align:right">Ctrl+C Ctrl+V</div>
<svg style="left:332.70px;top:324.20px;color:#444746" width="12.00" height="12.00" viewBox="0 0 24 24" fill="#444746" stroke="#444746" stroke-width="0.25" stroke-linejoin="round"><path d="M20 9V6h-2v3h-3v2h3v3h2v-3h3V9h-3zM9 12c2.210 0 4-1.790 4-4s-1.790-4-4-4-4 1.790-4 4 1.790 4 4 4zm0-6c1.100 0 2 .9 2 2s-.9 2-2 2-2-.9-2-2 .9-2 2-2zm6.390 8.560C13.710 13.700 11.530 13 9 13s-4.710.7-6.390 1.560C1.610 15.070 1 16.100 1 17.220V20h16v-2.780c0-1.120-.61-2.150-1.610-2.660zM15 18H3v-.78c0-.38.2-.72.520-.88C4.710 15.730 6.630 15 9 15c2.370 0 4.290.73 5.480 1.340.32.160.52.500.52.880V18z"/></svg>
<div class="t mi" style="left:354.9px;top:325px;font-size:8.9px">Freigeben</div>
<svg style="left:509.500px;top:327.9px" width="4" height="6" viewBox="0 0 4 6"><path d="M0 0l4 3-4 3z" fill="#1f1f1f"/></svg>
<svg style="left:332.45px;top:344.45px;color:#444746" width="12.50" height="12.50" viewBox="0 0 24 24" fill="#444746" stroke="#444746" stroke-width="0.25" stroke-linejoin="round"><path d="M20 6h-8l-2-2H4c-1.100 0-1.990.9-1.990 2L2 18c0 1.100.9 2 2 2h16c.95 0 1.750-.67 1.950-1.560L24 10H6.500l-2 8H4V6h5.170l2 2H20v1h2V8c0-1.100-.9-2-2-2zM6.560 18l1.500-6h13.380l-1.500 6H6.560z"/></svg>
<div class="t mi" style="left:354.9px;top:345px;font-size:8.85px">Organisieren</div>
<svg style="left:509.500px;top:348.4px" width="4" height="6" viewBox="0 0 4 6"><path d="M0 0l4 3-4 3z" fill="#1f1f1f"/></svg>
<svg style="left:332.70px;top:364.70px;color:#444746" width="12.00" height="12.00" viewBox="0 0 24 24" fill="#444746" stroke="#444746" stroke-width="0.25" stroke-linejoin="round"><path d="M11 7h2v2h-2zm0 4h2v6h-2zm1-9C6.480 2 2 6.480 2 12s4.480 10 10 10 10-4.480 10-10S17.520 2 12 2zm0 18c-4.410 0-8-3.590-8-8s3.590-8 8-8 8 3.590 8 8-3.590 8-8 8z"/></svg>
<div class="t mi" style="left:354.9px;top:365px;">Dateiinformationen</div>
<svg style="left:509.500px;top:368.4px" width="4" height="6" viewBox="0 0 4 6"><path d="M0 0l4 3-4 3z" fill="#1f1f1f"/></svg>
<svg style="left:332.70px;top:394.70px;color:#444746" width="12.00" height="12.00" viewBox="0 0 24 24" fill="#444746" stroke="#444746" stroke-width="0.25" stroke-linejoin="round"><path d="M4 5.500h16M9.200 5V3.600h5.600V5M6.200 6.500v13.300h11.600V6.500" fill="none" stroke="currentColor" stroke-width="2" stroke-linejoin="round"/><path d="M10 9.500v7.300M14 9.500v7.300" fill="none" stroke="currentColor" stroke-width="1.700"/></svg>
<div class="t mi" style="left:354.9px;top:395px;font-size:8.91px">In Papierkorb verschieben</div>
<div class="t sc" style="left:413.9px;top:395px;width:100px;text-align:right">Delete</div>
<div class="menu" style="left:526px;top:321.500px;width:200px;height:49.500px"></div>
<div class="hl" style="left:526px;width:200px;top:346px;height:19.500px"></div>
<svg style="left:534.25px;top:329.75px;color:#444746" width="11.50" height="11.50" viewBox="0 0 24 24" fill="#444746" stroke="#444746" stroke-width="0.25" stroke-linejoin="round"><path d="M20 9V6h-2v3h-3v2h3v3h2v-3h3V9h-3zM9 12c2.210 0 4-1.790 4-4s-1.790-4-4-4-4 1.790-4 4 1.790 4 4 4zm0-6c1.100 0 2 .9 2 2s-.9 2-2 2-2-.9-2-2 .9-2 2-2zm6.390 8.560C13.710 13.700 11.530 13 9 13s-4.710.7-6.390 1.560C1.610 15.070 1 16.100 1 17.220V20h16v-2.780c0-1.120-.61-2.150-1.610-2.660zM15 18H3v-.78c0-.38.2-.72.520-.88C4.710 15.730 6.630 15 9 15c2.370 0 4.290.73 5.480 1.340.32.160.52.500.52.880V18z"/></svg>
<div class="t mi" style="left:555.9px;top:330px;font-size:8.9px">Freigeben</div>
<div class="t sc" style="left:614.7px;top:330px;width:100px;text-align:right">Ctrl+Alt+A</div>
<svg style="left:533.95px;top:349.75px;color:#444746" width="11.50" height="11.50" viewBox="0 0 24 24" fill="#444746" stroke="#444746" stroke-width="0.25" stroke-linejoin="round"><path d="M10.700 8H7a4 4 0 0 0 0 8h3.700M13.300 8H17a4 4 0 0 1 0 8h-3.700M8.200 12h7.600" fill="none" stroke="currentColor" stroke-width="1.900"/></svg>
<div class="t mi" style="left:555.9px;top:350px;font-size:8.85px">Link kopieren</div>
<svg class="dash" style="left:0;top:0" width="1200" height="606"><rect x="326.500" y="320.500" width="82" height="21"/><rect x="528.600" y="346.500" width="84.900" height="18.800"/></svg>
</div>
</div></div>
</body>
</html>
